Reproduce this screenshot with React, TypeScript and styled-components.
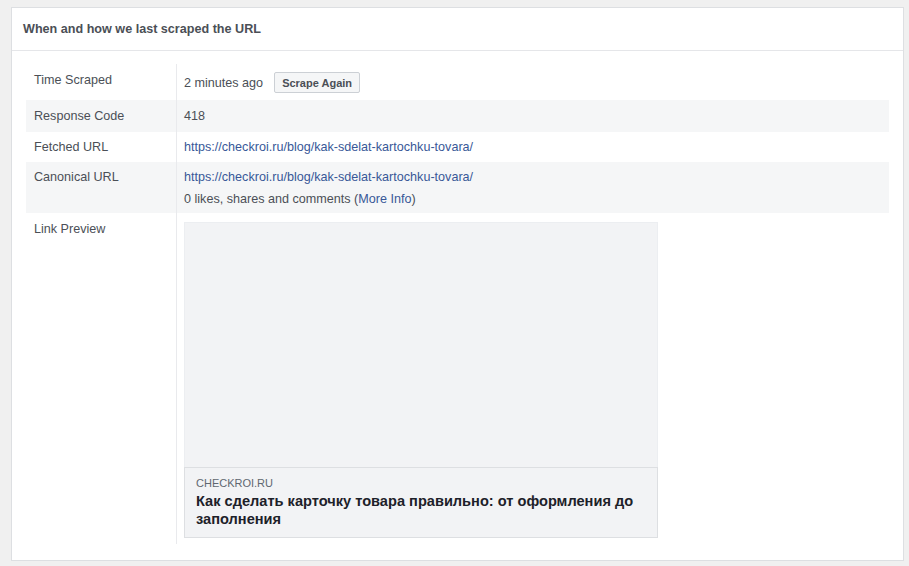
import React from "react";
import styled, { createGlobalStyle } from "styled-components";

const Global = createGlobalStyle`
  html, body { margin: 0; padding: 0; background: #f0f0f0; }
  body { font-family: "Liberation Sans", Arial, Helvetica, sans-serif; }
  * { box-sizing: border-box; }
`;

const Page = styled.div`
  padding: 7px 5px 0 11px;
  width: 909px;
  height: 566px;
`;

const Card = styled.section`
  width: 893px;
  height: 554px;
  background: #fff;
  border: 1px solid #dddfe2;
  display: flex;
  flex-direction: column;
`;

const Header = styled.header`
  height: 43px;
  border-bottom: 1px solid #e5e6e9;
  padding: 0 11px;
  display: flex;
  align-items: center;
  font-size: 12.6px;
  font-weight: bold;
  color: #4b4f56;
`;

const Body = styled.div`
  padding: 13px 14px 0 14px;
`;

const Table = styled.div`
  display: flex;
  flex-direction: column;
  font-size: 12.6px;
  line-height: 16px;
  color: #4b4f56;
`;

const Row = styled.div<{ $shaded?: boolean }>`
  display: grid;
  grid-template-columns: 151px 1fr;
  background: ${(p) => (p.$shaded ? "#f5f6f7" : "transparent")};
`;

const Label = styled.div<{ $pad: string }>`
  padding: ${(p) => p.$pad};
  padding-left: 8px;
  border-right: 1px solid #e9eaed;
`;

const Value = styled.div<{ $pad: string }>`
  padding: ${(p) => p.$pad};
  padding-left: 7px;
  display: flex;
  flex-direction: column;
  align-items: flex-start;
`;

const Inline = styled.div`
  display: flex;
  align-items: center;
  gap: 11px;
`;

const Button = styled.button`
  height: 21px;
  padding: 0 7px;
  font-family: "Liberation Sans", Arial, Helvetica, sans-serif;
  font-size: 11px;
  font-weight: bold;
  color: #4b4f56;
  background: #f5f6f7;
  border: 1px solid #ccd0d5;
  border-radius: 2px;
`;

const Link = styled.a`
  color: #385898;
  text-decoration: none;
`;

const SubLine = styled.div`
  margin-top: 6px;
`;

const Preview = styled.div`
  width: 474px;
  display: flex;
  flex-direction: column;
  margin-bottom: 6px;
`;

const PreviewImage = styled.div`
  height: 245px;
  background: #f2f3f5;
  border: 1px solid #eceef1;
  border-bottom: none;
`;

const Caption = styled.div`
  background: #f2f3f5;
  border: 1px solid #dddfe2;
  padding: 9px 11px 9px 11px;
`;

const Domain = styled.div`
  font-size: 11px;
  line-height: 12px;
  color: #606770;
  text-transform: uppercase;
`;

const Title = styled.div`
  margin-top: 3px;
  font-size: 14.6px;
  line-height: 18px;
  font-weight: bold;
  color: #1d2129;
`;

export default function App() {
  return (
    <>
      <Global />
      <Page>
        <Card>
          <Header>When and how we last scraped the URL</Header>
          <Body>
            <Table>
              <Row>
                <Label $pad="8px 8px 0">Time Scraped</Label>
                <Value $pad="8px 8px 7px">
                  <Inline>
                    <span>2 minutes ago</span>
                    <Button>Scrape Again</Button>
                  </Inline>
                </Value>
              </Row>
              <Row $shaded>
                <Label $pad="8px 8px 8px">Response Code</Label>
                <Value $pad="8px 8px 8px">418</Value>
              </Row>
              <Row>
                <Label $pad="7px 8px 7px">Fetched URL</Label>
                <Value $pad="7px 8px 7px">
                  <Link href="#">https://checkroi.ru/blog/kak-sdelat-kartochku-tovara/</Link>
                </Value>
              </Row>
              <Row $shaded>
                <Label $pad="7px 8px 6px">Canonical URL</Label>
                <Value $pad="7px 8px 6px">
                  <Link href="#">https://checkroi.ru/blog/kak-sdelat-kartochku-tovara/</Link>
                  <SubLine>
                    0 likes, shares and comments (<Link href="#">More Info</Link>)
                  </SubLine>
                </Value>
              </Row>
              <Row>
                <Label $pad="8px 8px 0">Link Preview</Label>
                <Value $pad="9px 8px 0">
                  <Preview>
                    <PreviewImage />
                    <Caption>
                      <Domain>checkroi.ru</Domain>
                      <Title>Как сделать карточку товара правильно: от оформления до заполнения</Title>
                    </Caption>
                  </Preview>
                </Value>
              </Row>
            </Table>
          </Body>
        </Card>
      </Page>
    </>
  );
}
